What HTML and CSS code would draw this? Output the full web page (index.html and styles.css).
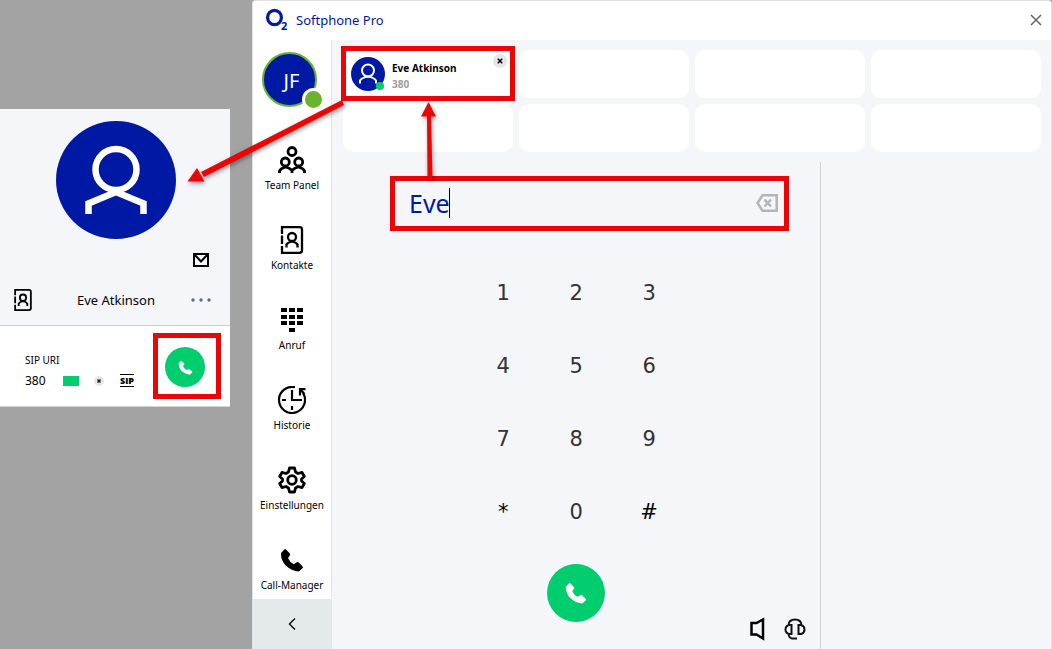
FILE: index.html
```html
<!DOCTYPE html>
<html lang="de">
<head>
  <meta charset="UTF-8">
  <meta name="viewport" content="width=device-width, initial-scale=1.0">
  <title>Softphone Pro</title>
  <link rel="stylesheet" href="styles.css">
</head>
<body>
  <svg class="defs" width="0" height="0" aria-hidden="true">
    <symbol id="person" viewBox="0 0 120 118">
      <ellipse cx="60" cy="59" rx="60" ry="59" fill="#0019a5"/>
      <circle cx="60" cy="48.500" r="20.500" fill="none" stroke="#fff" stroke-width="6.500"/>
      <path d="M32.500 93V82.500L60 71L87.500 82.500V93" fill="none" stroke="#fff" stroke-width="6.500"/>
    </symbol>
    <symbol id="phone" viewBox="0 0 24 24">
      <path d="M4.400 1.400Q5.200 .8 6 1.500L9.900 5.600Q10.500 6.400 10 7.200L8 10Q9.500 14 13.800 16.200L16.800 14.200Q17.700 13.700 18.400 14.300L22.700 18.500Q23.300 19.300 22.700 20L19.500 23Q18.800 23.500 18 23.400Q11 22.500 5.800 17.500Q1 12.500 .9 6Q.9 5.200 1.500 4.500Z"/>
    </symbol>
    <symbol id="contact" viewBox="0 0 28 28">
      <g fill="none" stroke="#000" stroke-width="2.300">
        <path d="M4 8V1.200H21.500Q24 1.200 24 3.500V24.500Q24 26.800 21.500 26.800H4V20M4 9.500V18"/>
        <circle cx="14" cy="11" r="4"/>
        <path d="M8.500 21.500V18.500Q9.500 16.500 14 15.500Q18.500 16.500 19.500 18.500V21.500"/>
      </g>
    </symbol>
  </svg>

  <aside class="desktop">
    <section class="card">
      <div class="card-top">
        <svg class="card-avatar" viewBox="0 0 120 118"><use href="#person"/></svg>
        <button class="mail" aria-label="E-Mail">
          <svg width="16" height="14" viewBox="0 0 16 14" fill="none" stroke="#000" stroke-width="2"><path d="M1 1H15V13H1ZM1.500 1.500L8 8.500L14.500 1.500"/></svg>
        </button>
        <div class="card-name">
          <svg width="20" height="22" viewBox="2 0 24 28" stroke="#000"><use href="#contact" width="28" height="28"/></svg>
          <span>Eve Atkinson</span>
          <button aria-label="Mehr">
            <svg width="20" height="4" viewBox="0 0 20 4" fill="#5f6b80"><circle cx="2" cy="2" r="1.700"/><circle cx="10" cy="2" r="1.700"/><circle cx="18" cy="2" r="1.700"/></svg>
          </button>
        </div>
      </div>
      <div class="card-bottom">
        <div class="sip">
          <div class="sip-label">SIP URI</div>
          <div class="sip-row">
            <span class="sip-number">380</span>
            <span class="sip-status"></span>
            <svg class="sip-dot" width="10" height="10" viewBox="0 0 10 10"><circle cx="5" cy="5" r="5" fill="#e4e7ea"/><path d="M3.500 3.500L6.500 6.500M6.500 3.500L3.500 6.500" stroke="#222" stroke-width="1.500"/></svg>
            <span class="sip-tag">SIP</span>
          </div>
        </div>
        <div class="call-frame">
          <button class="call small" aria-label="Anrufen"><svg viewBox="0 0 24 24"><use href="#phone"/></svg></button>
        </div>
      </div>
    </section>
  </aside>

  <div class="window">
    <header class="titlebar">
      <svg class="logo" width="22" height="22" viewBox="0 0 22 22">
        <ellipse cx="8.500" cy="8.500" rx="6.900" ry="7.200" fill="none" stroke="#0019a5" stroke-width="3.200"/>
        <text x="15" y="21">2</text>
      </svg>
      <span class="title">Softphone Pro</span>
      <button class="close" aria-label="Schließen">
        <svg width="12" height="12" viewBox="0 0 12 12" stroke="#666" stroke-width="1.500"><path d="M1 1L11 11M11 1L1 11"/></svg>
      </button>
    </header>

    <div class="content">
      <aside class="sidebar">
        <div class="me">JF<span class="presence"></span></div>
        <nav>
          <a href="#">
            <svg viewBox="0 0 28 28" fill="none" stroke="#000" stroke-width="2.800">
              <circle cx="14" cy="5.500" r="4"/>
              <circle cx="7.300" cy="16" r="4"/>
              <circle cx="20.700" cy="16" r="4"/>
              <path d="M1.500 27V25Q2.500 22.500 7.300 21Q12 22 14 24.500Q16 22 20.700 21Q25.500 22.500 26.500 25V27M14 24V27"/>
            </svg>
            Team Panel
          </a>
          <a href="#">
            <svg viewBox="0 0 28 28"><use href="#contact"/></svg>
            Kontakte
          </a>
          <a href="#">
            <svg viewBox="0 0 28 28">
              <path d="M3 2h6v4H3zM11 2h6v4h-6zM19 2h6v4h-6zM3 9h6v4H3zM11 9h6v4h-6zM19 9h6v4h-6zM3 15h6v4H3zM11 15h6v4h-6zM19 15h6v4h-6zM11 22h6v4h-6z"/>
            </svg>
            Anruf
          </a>
          <a href="#">
            <svg viewBox="0 0 28 28" fill="none" stroke="#000" stroke-width="2.200">
              <path d="M17 1.300A13 13 0 1 0 25 7M27.500 3.200H22V9.500M22.500 3.700L26.500 8M14 4V14H24M4 14H8M14 20V24"/>
            </svg>
            Historie
          </a>
          <a href="#">
            <svg viewBox="0 0 28 28" fill="none" stroke="#000" stroke-width="2.800" stroke-linejoin="round">
              <path d="M11.500 2H16.500L17.500 6L20 7.500L24 6.300L26.300 10.500L23.500 13V15L26.300 17.500L24 21.700L20 20.500L17.500 22L16.500 26H11.500L10.500 22L8 20.500L4 21.700L1.700 17.500L4.500 15V13L1.700 10.500L4 6.300L8 7.500L10.500 6Z"/>
              <circle cx="14" cy="14" r="4.300"/>
            </svg>
            Einstellungen
          </a>
          <a href="#">
            <svg viewBox="0 0 28 28"><use href="#phone" x="2" y="2" width="24" height="24"/></svg>
            Call-Manager
          </a>
        </nav>
        <button class="collapse" aria-label="Einklappen">
          <svg width="8" height="14" viewBox="0 0 8 14" fill="none" stroke="#111" stroke-width="1.500"><path d="M7 1.500L1.500 7L7 12.500"/></svg>
        </button>
      </aside>

      <main>
        <div class="slots">
          <div class="slot active">
            <svg class="slot-avatar" viewBox="0 0 34 34">
              <circle cx="17" cy="17" r="17" fill="#0019a5"/>
              <g fill="none" stroke="#fff" stroke-width="2">
                <circle cx="17" cy="13.500" r="6"/>
                <path d="M9 26.500V23.500Q11 20.500 17 19.500Q23 20.500 25 23.500V26.500"/>
              </g>
              <circle cx="29" cy="29" r="4" fill="#00cd6e"/>
            </svg>
            <div class="slot-text">
              <div>Eve Atkinson</div>
              <div class="slot-number">380</div>
            </div>
            <button class="slot-close" aria-label="Entfernen">
              <svg width="6" height="6" viewBox="0 0 6 6" stroke="#000" stroke-width="1.500"><path d="M.8 .8L5.200 5.200M5.200 .8L.8 5.200"/></svg>
            </button>
          </div>
          <div class="slot"></div>
          <div class="slot"></div>
          <div class="slot"></div>
          <div class="slot"></div>
          <div class="slot"></div>
          <div class="slot"></div>
          <div class="slot"></div>
        </div>

        <div class="panels">
          <section class="dialer">
            <div class="search">
              <input type="text" value="Eve" aria-label="Name oder Nummer">
              <span class="caret"></span>
              <button class="erase" aria-label="Löschen">
                <svg width="22" height="18" viewBox="0 0 22 18" fill="none" stroke="#b3b5b8" stroke-width="2.500"><path d="M6.500 1.300H20.700V16.700H6.500L1.500 9Z"/><path d="M8.500 5.500L15 12.500M15 5.500L8.500 12.500"/></svg>
              </button>
            </div>
            <div class="keypad">
              <button>1</button><button>2</button><button>3</button>
              <button>4</button><button>5</button><button>6</button>
              <button>7</button><button>8</button><button>9</button>
              <button class="sign">*</button><button>0</button><button class="sign">#</button>
            </div>
            <div class="dialer-foot">
              <button class="call" aria-label="Anrufen"><svg viewBox="0 0 24 24"><use href="#phone"/></svg></button>
              <div class="audio">
                <button aria-label="Lautsprecher">
                  <svg width="16" height="24" viewBox="0 0 16 24" fill="none" stroke="#000" stroke-width="2.500"><path d="M2.500 6H7.500L14 2.500V21.500L7.500 17.500H2.500Z"/></svg>
                </button>
                <button aria-label="Headset">
                  <svg width="22" height="22" viewBox="0 0 22 22" fill="none" stroke="#111" stroke-width="2">
                    <path d="M4.500 7Q5 1.500 11 1.500T17.500 7M7.500 7H5Q1.500 8 1.500 11.500T5 16H7.500ZM14.500 7H17Q20.500 8 20.500 11.500T17 16H14.500ZM4.500 16Q5 20 8 20.500H13"/>
                  </svg>
                </button>
              </div>
            </div>
          </section>
          <section class="side"></section>
        </div>
      </main>
    </div>
  </div>

  <svg class="arrows" width="460" height="200" viewBox="0 0 460 200" aria-hidden="true">
    <g fill="#ea0606" stroke="none">
      <path d="M342 100L344 105L204 177L201 172Z"/>
      <path d="M187.500 181.500L197 168L204.500 181.500Z"/>
      <path d="M427 115H431L432.500 179H427.500Z"/>
      <path d="M428.500 102L421 116.500H436Z"/>
    </g>
  </svg>
</body>
</html>
```
FILE: styles.css
```css
* {
  box-sizing: border-box;
}
body {
  margin: 0;
  min-height: 100vh;
  display: flex;
  position: relative;
  background-color: #a3a3a3;
  color: #000;
  font-family: "Noto Sans", "Open Sans", sans-serif;
  font-size: 10px;
  line-height: 14px;
}
button {
  padding: 0;
  border: none;
  background: none;
  color: inherit;
  font: inherit;
  cursor: pointer;
}
svg {
  display: block;
}
.defs {
  position: absolute;
}

/* contact card */
.desktop {
  flex: 0 0 252px;
  padding: 109px 22px 0 0;
}
.card-top {
  display: flex;
  flex-direction: column;
  background-color: #f4f6fa;
  border-bottom: 1px solid #ccced1;
  padding: 12px 19px 14px 13px;
}
.card-avatar {
  width: 120px;
  height: 118px;
  align-self: center;
  margin-left: 8px;
}
.mail {
  align-self: flex-end;
  margin: 14px 2px 0 0;
}
.card-name {
  display: grid;
  grid-template-columns: 20px 1fr 20px;
  align-items: center;
  margin-top: 22px;
  font-size: 13px;
  line-height: 22px;
}
.card-name span {
  padding-left: 8px;
  text-align: center;
}
.card-bottom {
  display: flex;
  align-items: center;
  justify-content: space-between;
  background-color: #fff;
  border-bottom: 1px solid #d4d4d4;
  padding: 7px 9px 7px 25px;
}
.sip {
  padding-top: 9px;
}
.sip-label {
  line-height: 20px;
}
.sip-row {
  display: flex;
  align-items: center;
}
.sip-number {
  width: 38px;
  font-size: 12px;
  line-height: 22px;
}
.sip-status {
  width: 16px;
  height: 10px;
  background-color: #00cd6e;
}
.sip-dot {
  margin: 0 16px 0 15px;
}
.sip-tag {
  border: solid #000;
  border-width: 1px 0;
  font-family: "Open Sans", sans-serif;
  font-size: 9px;
  font-weight: 800;
  line-height: 11px;
}
.call-frame {
  border: 5px solid #ea0606;
  padding: 9px 11px 7px 7px;
}
.call {
  display: flex;
  align-items: center;
  justify-content: center;
  width: 58px;
  height: 58px;
  border-radius: 50%;
  background-color: #00cd6e;
  fill: #fff;
}
.call svg {
  width: 22px;
  height: 22px;
}
.call.small {
  width: 40px;
  height: 40px;
}
.call.small svg {
  width: 15px;
  height: 15px;
}

/* main window */
.window {
  flex: 1;
  display: flex;
  flex-direction: column;
  min-width: 0;
  background-color: #fff;
  border: 1px solid #dfe3e6;
  border-bottom: none;
  border-radius: 4px 4px 0 0;
}
.titlebar {
  display: flex;
  align-items: center;
  height: 39px;
  padding: 0 9px 2px 13px;
  color: #0019a5;
}
.logo {
  overflow: visible;
}
.logo text {
  font-size: 11px;
  font-weight: 700;
  fill: #0019a5;
}
.title {
  flex: 1;
  margin-left: 8px;
  font-size: 13px;
  line-height: 18px;
}
.content {
  flex: 1;
  display: flex;
}
.sidebar {
  flex: 0 0 79px;
  display: flex;
  flex-direction: column;
  border-right: 1px solid #e4e7ea;
}
.me {
  position: relative;
  width: 55px;
  height: 55px;
  margin: 12px 0 0 9px;
  border: 2px solid #6ab42d;
  border-radius: 50%;
  background-color: #0019a5;
  color: #fff;
  font-size: 20px;
  line-height: 53px;
  padding-left: 4px;
  text-align: center;
}
.presence {
  position: absolute;
  right: -10px;
  bottom: -6px;
  width: 23px;
  height: 23px;
  border: 3px solid #fff;
  border-radius: 50%;
  background-color: #6ab42d;
}
nav {
  display: flex;
  flex-direction: column;
  gap: 34px;
  margin-top: 39px;
}
nav a {
  display: flex;
  flex-direction: column;
  align-items: center;
  gap: 4px;
  color: #000;
  text-decoration: none;
}
nav svg {
  width: 28px;
  height: 28px;
}
.collapse {
  display: flex;
  align-items: center;
  justify-content: center;
  height: 50px;
  margin-top: auto;
  background-color: #e4e9ec;
}

main {
  flex: 1;
  display: flex;
  flex-direction: column;
  min-width: 0;
  background-color: #f4f6fa;
}
.slots {
  display: grid;
  grid-template-columns: repeat(4, 1fr);
  gap: 6px;
  padding: 10px 10px 10px 11px;
}
.slot {
  position: relative;
  display: flex;
  align-items: center;
  height: 48px;
  padding: 0 8px;
  border-radius: 10px;
  background-color: #fff;
}
.slot.active::after {
  content: "";
  position: absolute;
  inset: -4px -2px -3px;
  border: 5px solid #ea0606;
  pointer-events: none;
}
.slot-avatar {
  width: 34px;
  height: 34px;
  margin-right: 7px;
}
.slot-text {
  padding-top: 4px;
  font-weight: 700;
  line-height: 16px;
}
.slot-number {
  color: #9a9c9f;
}
.slot-close {
  position: absolute;
  top: 4px;
  right: 6px;
  display: flex;
  align-items: center;
  justify-content: center;
  width: 14px;
  height: 14px;
  border-radius: 50%;
  background-color: #e4e7ea;
}
.panels {
  flex: 1;
  display: flex;
}
.dialer {
  flex: 489;
  display: flex;
  flex-direction: column;
  align-items: center;
  padding-top: 14px;
  border-right: 1px solid #cfd1d4;
}
.side {
  flex: 230;
}
.search {
  display: flex;
  align-items: center;
  align-self: stretch;
  height: 55px;
  margin: 0 31px 0 58px;
  padding: 0 6px 2px 14px;
  border: 5px solid #ea0606;
}
.search input {
  width: 40px;
  padding: 0;
  border: none;
  outline: none;
  background: none;
  color: #0019a5;
  font: 25px/34px "Noto Sans", sans-serif;
}
.caret {
  width: 1px;
  height: 30px;
  background-color: #000;
}
.erase {
  margin-left: auto;
}
.keypad {
  display: grid;
  grid-template-columns: repeat(3, 73px);
  grid-auto-rows: 73px;
  margin: 25px 0 16px;
}
.keypad button {
  color: #333;
  font: 21px/28px "DejaVu Sans", sans-serif;
}
.keypad .sign {
  color: #000;
}
.dialer-foot {
  flex: 1;
  display: grid;
  grid-template-columns: 1fr auto 1fr;
  align-self: stretch;
}
.dialer-foot .call {
  grid-column: 2;
}
.audio {
  display: flex;
  align-items: center;
  align-self: end;
  justify-self: end;
  gap: 19px;
  margin: 0 14px 8px 0;
}

/* callout arrows */
.arrows {
  position: absolute;
  top: 0;
  left: 0;
  pointer-events: none;
  filter: drop-shadow(1px 2px 2px rgba(0, 0, 0, 0.4));
}
```
